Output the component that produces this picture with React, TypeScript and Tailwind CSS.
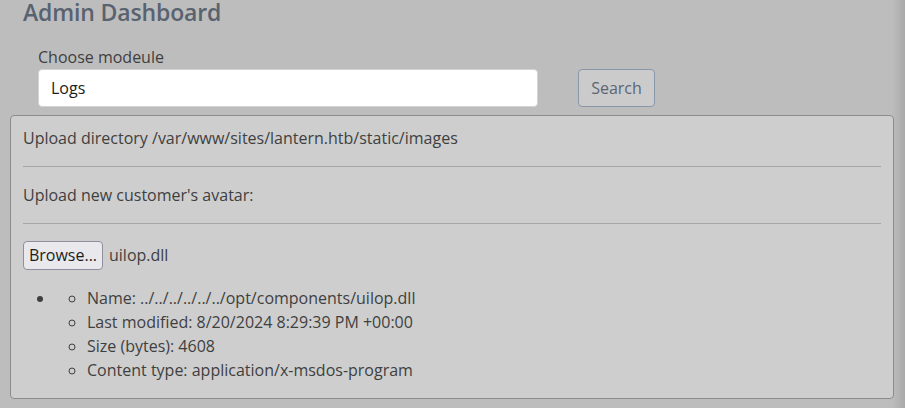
const fileInfo = [
  "Name: ../../../../../../opt/components/uilop.dll",
  "Last modified: 8/20/2024 8:29:39 PM +00:00",
  "Size (bytes): 4608",
  "Content type: application/x-msdos-program",
];

const App = () => {
  return (
    <div className="h-[408px] overflow-hidden bg-[linear-gradient(to_right,#bdbdbd_calc(100%-13px),#a9a9a9)] font-['Open_Sans',sans-serif] text-base leading-6 text-[#3f3f3f]">
      <h2 className="-mt-px pl-[23px] text-[23px] font-semibold leading-[1.2] tracking-[-0.15px] text-[#59626f]">
        Admin Dashboard
      </h2>
      <div className="mt-[18px] flex items-end pl-[38px]">
        <div className="flex w-[500px] flex-col">
          <label className="text-[#3f3f3f]">Choose modeule</label>
          <div className="flex h-[38px] items-center rounded-[4px] border border-[#d4d4d4] bg-white px-3 text-[#1c1c1c]">
            Logs
          </div>
        </div>
        <button className="ml-[40px] h-[38px] w-[77px] rounded-[4px] border border-[#8898aa] bg-[#cbcbcb] text-[#5b6676]">
          Search
        </button>
      </div>
      <div className="mx-[10px] mt-[8px] h-[284px] w-[884px] rounded-[4px] border border-[#8c8c8c] bg-[#cecece] px-3 pt-[10px]">
        <p>Upload directory /var/www/sites/lantern.htb/static/images</p>
        <hr className="my-4 border-t border-[#a6a6a6]" />
        <p>Upload new customer's avatar:</p>
        <hr className="mt-4 mb-[17px] border-t border-[#a6a6a6]" />
        <div className="flex items-center gap-[6px]">
          <button className="h-[29px] w-[80px] rounded-[4px] border border-[#8f8f9d] bg-[#e9e9ed] text-[#1c1c1c]">
            Browse...
          </button>
          <span>uilop.dll</span>
        </div>
        <ul className="mt-4 list-disc pl-8">
          <li>
            <ul className="list-[circle] pl-8">
              {fileInfo.map((line) => (
                <li key={line}>{line}</li>
              ))}
            </ul>
          </li>
        </ul>
      </div>
    </div>
  );
};

export default App;
